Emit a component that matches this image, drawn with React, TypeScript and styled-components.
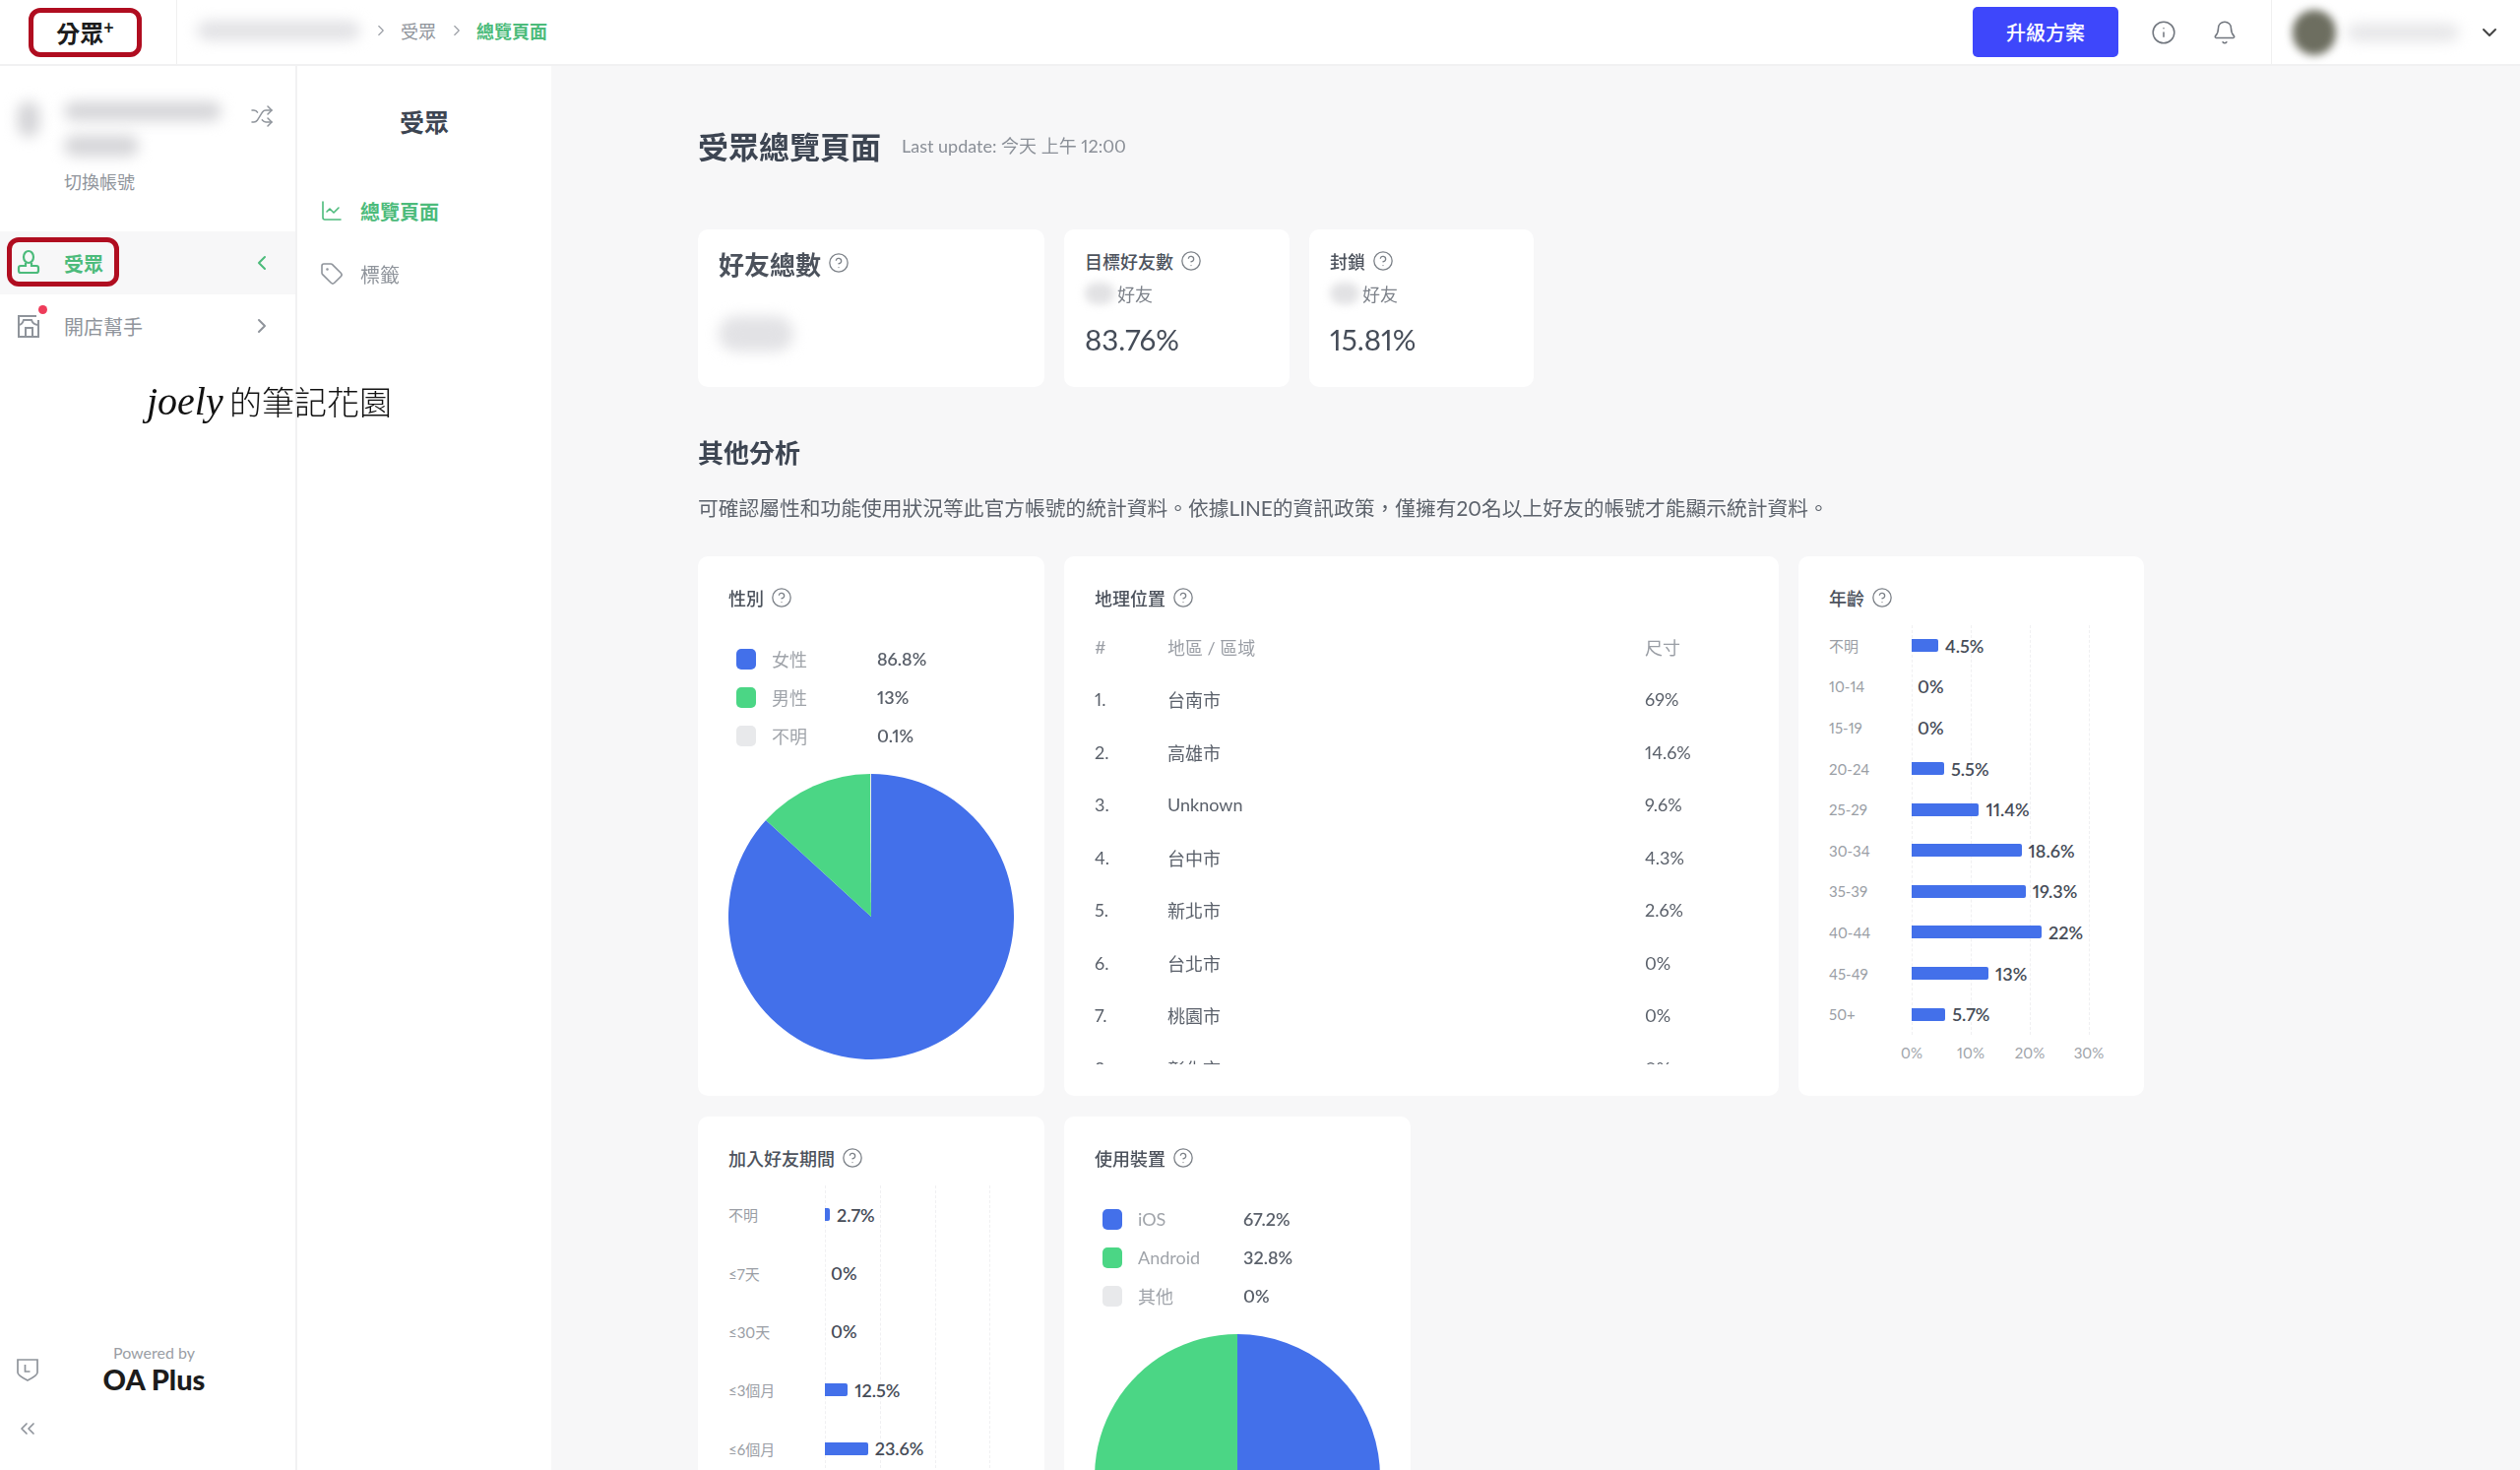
import React from 'react'
import styled, { createGlobalStyle } from 'styled-components'
import {
  Bell,
  ChartLine,
  ChevronDown,
  ChevronLeft,
  ChevronRight,
  ChevronsLeft,
  CircleHelp,
  Info,
  Shuffle,
  Tag
} from 'lucide-react'

const GlobalStyle = createGlobalStyle`
  html, body {
    margin: 0;
    height: 100%;
    overflow: hidden;
    background: #f7f7f8;
  }
  body {
    font-family: Lato, "Noto Sans CJK TC", sans-serif;
    font-variant-numeric: proportional-nums;
    color: #3d4552;
  }
  * {
    box-sizing: border-box;
  }
`

const Page = styled.div`
  position: relative;
  width: 2560px;
  height: 1493px;
  overflow: hidden;
  display: flex;
  flex-direction: column;
  filter: blur(0.5px);
`

const Header = styled.header`
  height: 67px;
  flex: none;
  display: flex;
  align-items: center;
  background: #fff;
  border-bottom: 2px solid #f1f1f2;
`

const LogoCell = styled.div`
  width: 180px;
  height: 100%;
  display: flex;
  align-items: center;
  padding-left: 29px;
  border-right: 1px solid #f0f0f0;
`

const Logo = styled.div`
  width: 115px;
  height: 50px;
  border: 5px solid #b00d20;
  border-radius: 12px;
  display: flex;
  align-items: center;
  justify-content: center;
  font-size: 24px;
  font-weight: 700;
  color: #1c1c1c;

  sup {
    font-size: 18px;
    line-height: 1;
    margin-top: -10px;
  }
`

const Breadcrumb = styled.nav`
  display: flex;
  align-items: center;
  padding-left: 20px;
  margin-top: -3px;
  color: #9a9ea5;
`

const Crumb = styled.span<{ $active?: boolean }>`
  font-size: 18px;
  font-weight: ${p => (p.$active ? 700 : 400)};
  color: ${p => (p.$active ? '#4cbb7b' : '#8f949b')};
`

const CrumbSep = styled(ChevronRight)`
  width: 18px;
  height: 18px;
  margin: 0 11px 0 12px;
  stroke-width: 1.5;
`

const Smudge = styled.div<{ $w: number; $h: number; $color?: string; $blur?: number }>`
  width: ${p => p.$w}px;
  height: ${p => p.$h}px;
  flex: none;
  border-radius: ${p => p.$h / 2}px;
  background: ${p => p.$color ?? '#e2e2e5'};
  filter: blur(${p => p.$blur ?? 7}px);
`

const HeaderRight = styled.div`
  margin-left: auto;
  height: 100%;
  display: flex;
  align-items: center;
  color: #71767e;
`

const UpgradeButton = styled.button`
  width: 148px;
  height: 51px;
  border: 0;
  border-radius: 5px;
  background: #3e47fb;
  color: #fff;
  font: 500 20px Lato, "Noto Sans CJK TC", sans-serif;
`

const HeaderIcon = styled.span<{ $gap: number }>`
  display: flex;
  margin-left: ${p => p.$gap}px;

  svg {
    width: 26px;
    height: 26px;
    stroke-width: 1.4;
  }
`

const UserCell = styled.div`
  height: 100%;
  margin-left: 34px;
  padding: 0 19px 0 21px;
  display: flex;
  align-items: center;
  border-left: 1px solid #f0f0f0;

  svg {
    width: 24px;
    height: 24px;
    margin-left: 19px;
    color: #444;
  }
`

const Avatar = styled(Smudge)`
  margin-right: 11px;
`

const Body = styled.div`
  flex: 1;
  min-height: 0;
  display: flex;
`

const Sidebar = styled.aside`
  position: relative;
  width: 302px;
  flex: none;
  display: flex;
  flex-direction: column;
  background: #fff;
  border-right: 2px solid #f1f1f2;
`

const Account = styled.div`
  height: 168px;
  flex: none;
  padding: 36px 0 0 18px;
  display: flex;
  gap: 25px;
  color: #8f949b;
`

const AccountInfo = styled.div`
  width: 164px;
  display: flex;
  flex-direction: column;
  gap: 14px;
`

const AccountHint = styled.div`
  font-size: 18px;
  color: #8f949b;
  margin-top: -2px;
`

const SwitchIcon = styled(Shuffle)`
  width: 24px;
  height: 24px;
  margin-top: 3px;
  stroke-width: 1.5;
`

const MenuRow = styled.div<{ $active?: boolean }>`
  height: 64px;
  flex: none;
  position: relative;
  padding: 0 22px 0 15px;
  display: flex;
  align-items: center;
  gap: 22px;
  font-size: 20px;
  font-weight: ${p => (p.$active ? 700 : 400)};
  color: ${p => (p.$active ? '#4cbb7b' : '#8f949b')};
  background: ${p => (p.$active ? '#f7f7f8' : 'transparent')};

  > svg:last-child {
    margin-left: auto;
    width: 24px;
    height: 24px;
    stroke-width: 2;
  }
`

const RedBox = styled.div`
  position: absolute;
  left: 7px;
  top: 6px;
  width: 114px;
  height: 50px;
  border: 5px solid #b00d20;
  border-radius: 12px;
`

const NoticeDot = styled.span`
  position: absolute;
  left: 39px;
  top: 11px;
  width: 9px;
  height: 9px;
  border-radius: 50%;
  background: #ee3c5a;
`

const SidebarFooter = styled.div`
  margin-top: auto;
  padding: 0 27px 30px 16px;
  color: #8f949b;
`

const FooterRow = styled.div`
  display: flex;
  align-items: center;
`

const Powered = styled.div`
  flex: 1;
  text-align: center;
  font-size: 16px;
  line-height: 20px;
  color: #9a9ea5;

  strong {
    display: block;
    font-size: 29px;
    line-height: 34px;
    font-weight: 900;
    color: #1c1c1c;
  }
`

const CollapseIcon = styled(ChevronsLeft)`
  display: block;
  width: 24px;
  height: 24px;
  margin-top: 21px;
  stroke-width: 1.7;
`

const SubNav = styled.nav`
  width: 258px;
  flex: none;
  background: #fff;
  padding-left: 23px;
`

const SubNavTitle = styled.h2`
  margin: 40px 0 41px -23px;
  text-align: center;
  font-size: 25px;
  line-height: 34px;
  font-weight: 700;
  color: #3d4552;
`

const SubNavItem = styled.div<{ $active?: boolean }>`
  height: 64px;
  display: flex;
  align-items: center;
  gap: 17px;
  font-size: 20px;
  font-weight: ${p => (p.$active ? 700 : 400)};
  color: ${p => (p.$active ? '#4cbb7b' : '#8f949b')};

  svg {
    width: 24px;
    height: 24px;
    stroke-width: 1.6;
  }
`

const Main = styled.main`
  flex: 1;
  min-width: 0;
  padding: 58px 0 0 149px;
`

const TitleRow = styled.div`
  display: flex;
  align-items: center;
  gap: 21px;
  height: 44px;
`

const PageTitle = styled.h1`
  margin: 0;
  font-size: 31px;
  font-weight: 700;
  color: #3d4552;
`

const Updated = styled.span`
  font-size: 18px;
  color: #8a8f97;
`

const StatRow = styled.div`
  display: flex;
  gap: 20px;
  margin-top: 64px;
`

const Card = styled.section<{ $width: number }>`
  width: ${p => p.$width}px;
  flex: none;
  background: #fff;
  border-radius: 10px;
`

const TotalCard = styled(Card)`
  height: 160px;
  padding: 22px 21px;
`

const StatCard = styled(Card)`
  height: 160px;
  padding: 20px 21px;
`

const TitleLabel = styled.div<{ $size: number; $weight?: number }>`
  display: flex;
  align-items: center;
  gap: 7px;
  height: 24px;
  font-size: ${p => p.$size}px;
  font-weight: ${p => p.$weight ?? 500};
  color: #4c525c;

  svg {
    width: 22px;
    height: 22px;
    color: #7b8087;
    stroke-width: 1.4;
  }
`

const TotalValue = styled(Smudge)`
  margin-top: 42px;
`

const FriendLine = styled.div`
  display: flex;
  align-items: center;
  gap: 3px;
  height: 26px;
  margin-top: 8px;
  font-size: 18px;
  color: #7d828a;
`

const Percent = styled.div`
  margin-top: 15px;
  font-size: 29.5px;
  line-height: 38px;
  color: #454c58;
`

const SectionTitle = styled.h2`
  margin: 49px 0 0;
  font-size: 26px;
  line-height: 36px;
  font-weight: 700;
  color: #3d4552;
`

const SectionNote = styled.p`
  margin: 23px 0 0;
  font-size: 20.75px;
  line-height: 30px;
  color: #5d636c;
`

const ChartRow = styled.div<{ $top: number }>`
  display: flex;
  gap: 20px;
  margin-top: ${p => p.$top}px;
`

const ChartCard = styled(Card)<{ $height?: number }>`
  height: ${p => (p.$height ? `${p.$height}px` : 'auto')};
  padding: 30px 31px;
`

const Legend = styled.div`
  margin: 30.5px 0 19.5px;
`

const LegendRow = styled.div`
  height: 39px;
  display: grid;
  grid-template-columns: 36px 107px auto;
  align-items: center;
  padding-left: 8px;
  font-size: 18px;
  color: #a0a4aa;
`

const Swatch = styled.span<{ $color: string }>`
  width: 20px;
  height: 21px;
  border-radius: 5px;
  background: ${p => p.$color};
`

const LegendValue = styled.span`
  font-weight: 600;
  color: #5a606a;
`

const PieSvg = styled.svg`
  display: block;
`

const GeoTable = styled.div`
  height: 451px;
  margin-top: 11px;
  overflow: hidden;
`

const GeoRow = styled.div<{ $head?: boolean }>`
  height: 53.5px;
  display: grid;
  grid-template-columns: 74px 485px auto;
  align-items: center;
  font-size: 18px;
  color: ${p => (p.$head ? '#9a9ea5' : '#5a606a')};
`

const Chart = styled.div`
  position: relative;
`

const Plot = styled.div`
  position: relative;
`

const GridLine = styled.span<{ $left: number }>`
  position: absolute;
  top: 0;
  bottom: 0;
  left: ${p => p.$left}px;
  border-left: 1px dashed #f0f0f2;
`

const BarRow = styled.div<{ $height: number; $label: number }>`
  position: relative;
  height: ${p => p.$height}px;
  display: grid;
  grid-template-columns: ${p => p.$label}px auto;
  align-items: center;
`

const BarLabel = styled.span`
  font-size: 15px;
  color: #9a9ea5;
`

const BarValue = styled.span`
  display: flex;
  align-items: center;
  gap: 7px;
  font-size: 18px;
  font-weight: 600;
  color: #464c57;
`

const Bar = styled.span`
  height: 13px;
  background: #4370ea;
  border-radius: 0 2px 2px 0;
`

const AxisRow = styled.div`
  position: relative;
  height: 26px;
  margin-top: 5px;
`

const AxisTick = styled.span<{ $left: number }>`
  position: absolute;
  left: ${p => p.$left}px;
  top: 0;
  transform: translateX(-50%);
  font-size: 15px;
  line-height: 26px;
  color: #a0a4aa;
`

const Watermark = styled.div`
  position: absolute;
  left: 149px;
  top: 384px;
  display: flex;
  align-items: center;
  font-size: 33px;
  line-height: 44px;
  font-weight: 300;
  color: #111;

  em {
    width: 84px;
    font: italic 400 40px "Liberation Serif", serif;
  }
`

const BLUE = '#4370ea'
const GREEN = '#4bd685'
const GREY = '#e8e9eb'

const NOTE = '可確認屬性和功能使用狀況等此官方帳號的統計資料。依據LINE的資訊政策\uFF0C僅擁有20名以上好友的帳號才能顯示統計資料。'

const polar = (r: number, pct: number) => {
  const a = (pct / 100) * 2 * Math.PI
  return [r + r * Math.sin(a), r - r * Math.cos(a)].map(n => n.toFixed(2)).join(' ')
}

const Pie: React.FC<{ slices: Array<[number, string]> }> = ({ slices }) => {
  const r = 145
  let start = 0
  return (
    <PieSvg width={r * 2} height={r * 2} viewBox='0 0 290 290'>
      {slices.map(([value, color]) => {
        const end = start + value
        const d = `M${r} ${r} L${polar(r, start)} A${r} ${r} 0 ${value > 50 ? 1 : 0} 1 ${polar(r, end)} Z`
        start = end
        return <path key={color} d={d} fill={color} />
      })}
    </PieSvg>
  )
}

const CardTitle: React.FC<{ text: string }> = ({ text }) => (
  <TitleLabel $size={18}>
    {text}
    <CircleHelp />
  </TitleLabel>
)

interface BarChartProps {
  rows: Array<[string, number]>
  rowHeight: number
  labelWidth: number
  scale: number
  lines: number[]
  ticks?: string[]
  top: number
}

const BarChart: React.FC<BarChartProps> = ({ rows, rowHeight, labelWidth, scale, lines, ticks, top }) => (
  <Chart style={{ marginTop: top }}>
    <Plot>
      {lines.map(x => <GridLine key={x} $left={labelWidth + x} />)}
      {rows.map(([label, value]) => (
        <BarRow key={label} $height={rowHeight} $label={labelWidth}>
          <BarLabel>{label}</BarLabel>
          <BarValue>
            <Bar style={{ width: value * scale, marginRight: value === 0 ? -1 : 0 }} />
            {value}%
          </BarValue>
        </BarRow>
      ))}
    </Plot>
    {ticks && (
      <AxisRow>
        {ticks.map((t, i) => <AxisTick key={t} $left={labelWidth + lines[i]}>{t}</AxisTick>)}
      </AxisRow>
    )}
  </Chart>
)

const PersonIcon = () => (
  <svg width='28' height='28' viewBox='0 0 28 28' fill='none' stroke='currentColor' strokeWidth='2.2'>
    <ellipse cx='14' cy='8' rx='5' ry='6' />
    <path d='M11 14v3H6a2 2 0 0 0-2 2v3a2 2 0 0 0 2 2h16a2 2 0 0 0 2-2v-3a2 2 0 0 0-2-2h-5v-3' />
  </svg>
)

const StoreIcon = () => (
  <svg width='28' height='28' viewBox='0 0 28 28' fill='none' stroke='currentColor' strokeWidth='2'>
    <path d='M3 4h19M4 4v21h20V8' />
    <path d='M4 13c3 0 4-2 5-5h8c1 3 3 5 7 5' />
    <rect x='11' y='16' width='7' height='9' />
  </svg>
)

const ShieldIcon = () => (
  <svg width='24' height='26' viewBox='0 0 24 26' fill='none' stroke='currentColor' strokeWidth='1.7'>
    <path d='M2 3h20v13c0 3-6 6-10 8C8 22 2 19 2 16z' />
    <path d='M9.500 8v7h5' />
  </svg>
)

const geoRows: Array<[string, string, string]> = [
  ['1.', '台南市', '69%'],
  ['2.', '高雄市', '14.6%'],
  ['3.', 'Unknown', '9.6%'],
  ['4.', '台中市', '4.3%'],
  ['5.', '新北市', '2.6%'],
  ['6.', '台北市', '0%'],
  ['7.', '桃園市', '0%'],
  ['8.', '彰化市', '0%']
]

const ageRows: Array<[string, number]> = [
  ['不明', 4.5],
  ['10-14', 0],
  ['15-19', 0],
  ['20-24', 5.5],
  ['25-29', 11.4],
  ['30-34', 18.6],
  ['35-39', 19.3],
  ['40-44', 22],
  ['45-49', 13],
  ['50+', 5.7]
]

const joinRows: Array<[string, number]> = [
  ['不明', 2.7],
  ['≤7天', 0],
  ['≤30天', 0],
  ['≤3個月', 12.5],
  ['≤6個月', 23.6]
]

const App: React.FC = () => (
  <Page>
    <GlobalStyle />
    <Header>
      <LogoCell>
        <Logo>分眾<sup>+</sup></Logo>
      </LogoCell>
      <Breadcrumb>
        <Smudge $w={166} $h={20} />
        <CrumbSep />
        <Crumb>受眾</Crumb>
        <CrumbSep />
        <Crumb $active>總覽頁面</Crumb>
      </Breadcrumb>
      <HeaderRight>
        <UpgradeButton>升級方案</UpgradeButton>
        <HeaderIcon $gap={33}><Info /></HeaderIcon>
        <HeaderIcon $gap={36}><Bell /></HeaderIcon>
        <UserCell>
          <Avatar $w={44} $h={46} $color='#6d6e60' $blur={4} />
          <Smudge $w={114} $h={18} $color='#e6e6e8' />
          <ChevronDown />
        </UserCell>
      </HeaderRight>
    </Header>
    <Body>
      <Sidebar>
        <Account>
          <Smudge $w={22} $h={36} $color='#d4d4d7' />
          <AccountInfo>
            <Smudge $w={160} $h={20} $color='#d6d6d9' />
            <Smudge $w={76} $h={22} $color='#d6d6d9' />
            <AccountHint>切換帳號</AccountHint>
          </AccountInfo>
          <SwitchIcon />
        </Account>
        <MenuRow $active>
          <RedBox />
          <PersonIcon />
          <span>受眾</span>
          <ChevronLeft />
        </MenuRow>
        <MenuRow>
          <NoticeDot />
          <StoreIcon />
          <span>開店幫手</span>
          <ChevronRight />
        </MenuRow>
        <SidebarFooter>
          <FooterRow>
            <ShieldIcon />
            <Powered>
              Powered by
              <strong>OA Plus</strong>
            </Powered>
          </FooterRow>
          <CollapseIcon />
        </SidebarFooter>
      </Sidebar>
      <SubNav>
        <SubNavTitle>受眾</SubNavTitle>
        <SubNavItem $active><ChartLine />總覽頁面</SubNavItem>
        <SubNavItem><Tag />標籤</SubNavItem>
      </SubNav>
      <Main>
        <TitleRow>
          <PageTitle>受眾總覽頁面</PageTitle>
          <Updated>Last update: 今天 上午 12:00</Updated>
        </TitleRow>
        <StatRow>
          <TotalCard $width={352}>
            <TitleLabel $size={26} $weight={700}>好友總數<CircleHelp /></TitleLabel>
            <TotalValue $w={76} $h={36} />
          </TotalCard>
          <StatCard $width={229}>
            <TitleLabel $size={18}>目標好友數<CircleHelp /></TitleLabel>
            <FriendLine><Smudge $w={30} $h={22} $color='#e2e2e4' $blur={4} />好友</FriendLine>
            <Percent>83.76%</Percent>
          </StatCard>
          <StatCard $width={228}>
            <TitleLabel $size={18}>封鎖<CircleHelp /></TitleLabel>
            <FriendLine><Smudge $w={30} $h={22} $color='#e2e2e4' $blur={4} />好友</FriendLine>
            <Percent>15.81%</Percent>
          </StatCard>
        </StatRow>
        <SectionTitle>其他分析</SectionTitle>
        <SectionNote>{NOTE}</SectionNote>
        <ChartRow $top={34}>
          <ChartCard $width={352} $height={548}>
            <CardTitle text='性別' />
            <Legend>
              <LegendRow><Swatch $color={BLUE} />女性<LegendValue>86.8%</LegendValue></LegendRow>
              <LegendRow><Swatch $color={GREEN} />男性<LegendValue>13%</LegendValue></LegendRow>
              <LegendRow><Swatch $color={GREY} />不明<LegendValue>0.1%</LegendValue></LegendRow>
            </Legend>
            <Pie slices={[[86.8, BLUE], [13.1, GREEN], [0.1, GREY]]} />
          </ChartCard>
          <ChartCard $width={726} $height={548}>
            <CardTitle text='地理位置' />
            <GeoTable>
              <GeoRow $head><span>#</span><span>地區 / 區域</span><span>尺寸</span></GeoRow>
              {geoRows.map(([no, area, size]) => (
                <GeoRow key={no}><span>{no}</span><span>{area}</span><span>{size}</span></GeoRow>
              ))}
            </GeoTable>
          </ChartCard>
          <ChartCard $width={351} $height={548}>
            <CardTitle text='年齡' />
            <BarChart
              rows={ageRows}
              rowHeight={41.6}
              labelWidth={84}
              scale={6}
              lines={[0, 60, 120, 180]}
              ticks={['0%', '10%', '20%', '30%']}
              top={16}
            />
          </ChartCard>
        </ChartRow>
        <ChartRow $top={21}>
          <ChartCard $width={352}>
            <CardTitle text='加入好友期間' />
            <BarChart
              rows={joinRows}
              rowHeight={59.4}
              labelWidth={98}
              scale={1.85}
              lines={[0, 56, 112, 167]}
              top={16}
            />
          </ChartCard>
          <ChartCard $width={352}>
            <CardTitle text='使用裝置' />
            <Legend>
              <LegendRow><Swatch $color={BLUE} />iOS<LegendValue>67.2%</LegendValue></LegendRow>
              <LegendRow><Swatch $color={GREEN} />Android<LegendValue>32.8%</LegendValue></LegendRow>
              <LegendRow><Swatch $color={GREY} />其他<LegendValue>0%</LegendValue></LegendRow>
            </Legend>
            <Pie slices={[[67.2, BLUE], [32.8, GREEN]]} />
          </ChartCard>
        </ChartRow>
      </Main>
    </Body>
    <Watermark><em>joely</em>的筆記花園</Watermark>
  </Page>
)

export default App
